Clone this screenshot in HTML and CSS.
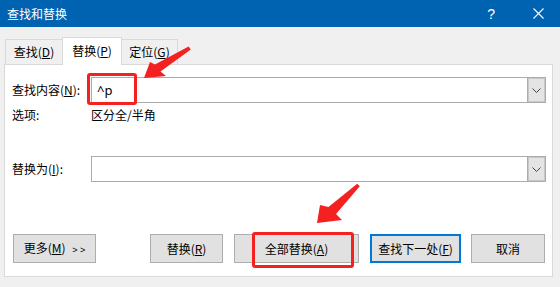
FILE: index.html
```html
<!DOCTYPE html>
<html lang="zh">
<head>
<meta charset="utf-8">
<link rel="stylesheet" href="styles.css">
</head>
<body>
<div class="dialog">
  <div class="titlebar">
    <span class="title">查找和替换</span>
    <span class="help">?</span>
    <svg class="close" width="11" height="11" viewBox="0 0 11 11"><path d="M0.5 0.5 L10.5 10.5 M10.5 0.5 L0.5 10.5" stroke="#fff" stroke-width="1.1" fill="none"/></svg>
  </div>
  <div class="tabs">
    <div class="tab">查找(<u>D</u>)</div>
    <div class="tab active">替换(<u>P</u>)</div>
    <div class="tab">定位(<u>G</u>)</div>
  </div>
  <div class="panel">
    <div class="row row-find">
      <label class="lbl">查找内容(<u>N</u>):</label>
      <div class="combo">
        <span class="value">^p</span>
        <span class="drop"><svg width="9" height="5" viewBox="0 0 9 5"><path d="M0.5 0.5 L4.5 4.5 L8.5 0.5" stroke="#444" stroke-width="1" fill="none"/></svg></span>
      </div>
    </div>
    <div class="row row-opt">
      <span class="lbl">选项:</span>
      <span class="opt">区分全/半角</span>
    </div>
    <div class="row row-repl">
      <label class="lbl">替换为(<u>I</u>):</label>
      <div class="combo">
        <span class="value"></span>
        <span class="drop"><svg width="9" height="5" viewBox="0 0 9 5"><path d="M0.5 0.5 L4.5 4.5 L8.5 0.5" stroke="#444" stroke-width="1" fill="none"/></svg></span>
      </div>
    </div>
    <div class="buttons">
      <button class="btn more">更多(<u>M</u>) <span class="chev">&gt; &gt;</span></button>
      <button class="btn repl">替换(<u>R</u>)</button>
      <button class="btn all">全部替换(<u>A</u>)</button>
      <button class="btn next">查找下一处(<u>F</u>)</button>
      <button class="btn cancel">取消</button>
    </div>
  </div>
  <div class="mark mark-find"></div>
  <div class="mark mark-all"></div>
  <svg class="arrows" width="560" height="287" viewBox="0 0 560 287">
    <polygon fill="#F52020" points="144,78 166,76 160.5,71.5 190.8,49.5 188.6,46.5 155,64.5 150,62"/>
    <polygon fill="#F52020" points="317,223 342,220 336,214 359.8,186.2 357.2,183.8 328.5,207 320,205"/>
  </svg>
</div>
</body>
</html>
```
FILE: styles.css
```css
html, body {
  margin: 0;
  padding: 0;
}
body {
  width: 560px;
  height: 287px;
  overflow: hidden;
  background: #F0F0F0;
  font-family: "Noto Sans CJK SC", "Noto Sans", sans-serif;
  font-size: 12px;
  color: #000;
}
u {
  text-decoration: underline;
  text-underline-offset: 1px;
}
.dialog {
  position: relative;
  width: 560px;
  height: 287px;
  display: flex;
  flex-direction: column;
}
.titlebar {
  height: 27px;
  background: #0063B1;
  color: #fff;
  display: flex;
  align-items: center;
  padding-left: 7px;
  box-sizing: border-box;
}
.title {
  font-size: 12px;
  line-height: 16px;
  flex: 1;
}
.help {
  font-family: "Liberation Sans", sans-serif;
  font-size: 14px;
  line-height: 16px;
  margin-right: 38px;
}
.close {
  margin-right: 16px;
}
.tabs {
  display: flex;
  margin: 10px 0 -1px 5px;
  height: 28px;
  position: relative;
  z-index: 1;
}
.tab {
  box-sizing: border-box;
  height: 25px;
  margin-top: 2px;
  border: 1px solid #D9D9D9;
  border-bottom: none;
  background: #F0F0F0;
  display: flex;
  align-items: center;
  justify-content: center;
  line-height: 16px;
}
.tab:nth-child(1) { width: 58px; }
.tab:nth-child(2) { width: 60px; margin-left: -1px; }
.tab:nth-child(3) { width: 57px; margin-left: -1px; }
.tab.active {
  height: 28px;
  margin-top: 0;
  background: #fff;
  padding-bottom: 2px;
}
.panel {
  margin: 0 7px 0 4px;
  height: 213px;
  box-sizing: border-box;
  border: 1px solid #D9D9D9;
  background: #fff;
  display: flex;
  flex-direction: column;
  padding: 0 6px 0 7px;
}
.row {
  display: flex;
  align-items: center;
}
.lbl {
  width: 79px;
  flex: none;
  line-height: 16px;
}
.row-find {
  margin-top: 12px;
  height: 26px;
}
.row-opt {
  margin-top: 3px;
  height: 18px;
}
.row-repl {
  margin-top: 32px;
  height: 26px;
}
.combo {
  box-sizing: border-box;
  width: 455px;
  height: 26px;
  border: 1px solid #ABABAB;
  display: flex;
  align-items: stretch;
}
.value {
  flex: 1;
  padding-left: 5px;
  font-size: 13px;
  line-height: 24px;
  font-family: "Noto Sans", sans-serif;
}
.drop {
  width: 17px;
  background: #E4E4E4;
  border-left: 1px solid #ABABAB;
  box-shadow: inset 0 0 0 1px #C8C8C8;
  display: flex;
  align-items: center;
  justify-content: center;
}
.opt {
  line-height: 16px;
}
.buttons {
  display: flex;
  margin-top: 52px;
  padding-left: 1px;
  height: 29px;
}
.btn {
  box-sizing: border-box;
  height: 29px;
  border: 1px solid #ADADAD;
  background: #E1E1E1;
  font-family: inherit;
  font-size: 12px;
  line-height: 16px;
  padding: 0;
  color: #000;
}
.more { width: 83px; }
.chev {
  font-family: "Liberation Sans", sans-serif;
  font-size: 9px;
  margin-left: 4px;
}
.repl { width: 73px; margin-left: 54px; }
.all { width: 125px; margin-left: 11px; }
.next { width: 91px; margin-left: 11px; border: 2px solid #0078D7; }
.cancel { width: 74px; margin-left: 10px; }
.mark {
  position: absolute;
  z-index: 2;
  border: 3px solid #F52020;
  border-radius: 3px;
  box-sizing: border-box;
}
.mark-find {
  left: 87px;
  top: 73px;
  width: 50px;
  height: 32px;
}
.mark-all {
  left: 252px;
  top: 232px;
  width: 102px;
  height: 36px;
}
.arrows {
  position: absolute;
  z-index: 2;
  left: 0;
  top: 0;
  pointer-events: none;
}
```
